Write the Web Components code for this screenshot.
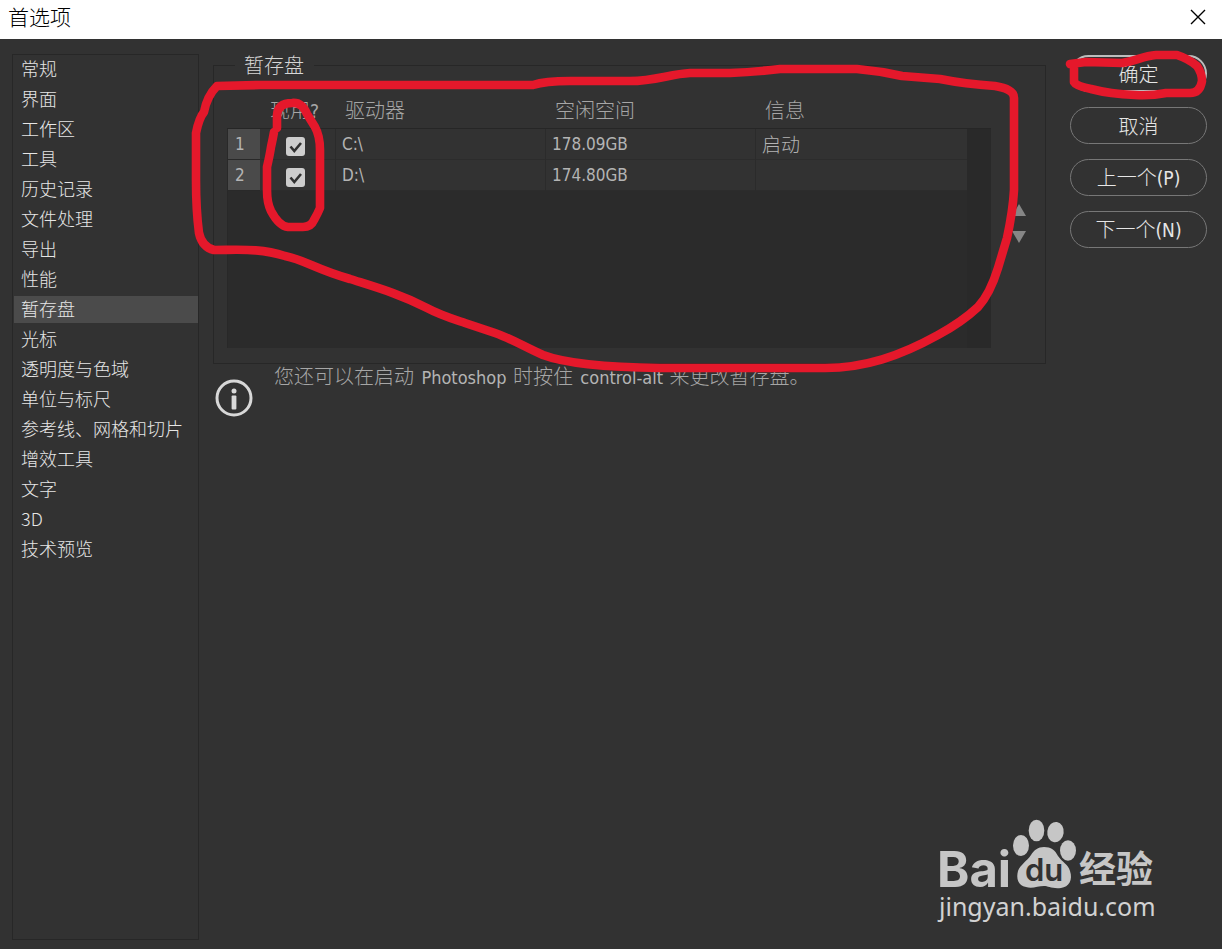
<!DOCTYPE html>
<html lang="zh-CN">
<head>
<meta charset="utf-8">
<title>首选项</title>
<style>
  html, body { margin: 0; min-height: 100%; background: #323232; }
  body { font-family: "DejaVu Sans Condensed", "Noto Sans CJK SC", sans-serif; }
</style>
</head>
<body>
<prefs-dialog></prefs-dialog>
<script>
const define = (name, html, setup) => {
  const template = document.createElement('template');
  template.innerHTML = html;
  customElements.define(name, class extends HTMLElement {
    constructor() {
      super();
      this.attachShadow({ mode: 'open' }).append(template.content.cloneNode(true));
    }
    connectedCallback() { if (setup) setup(this, this.shadowRoot); }
  });
};

define('title-bar', `
  <style>
    :host { display: flex; align-items: center; justify-content: space-between; height: 39px; padding: 0 15px 0 8px; background: #fff; color: #000; box-sizing: border-box; }
    h1 { margin: 0; padding-bottom: 8px; font: 300 21px/30px "Noto Sans CJK SC", sans-serif; }
    button { display: block; border: 0; padding: 0; margin: 0 0 6px; background: none; line-height: 0; }
  </style>
  <h1><slot></slot></h1>
  <button type="button" aria-label="关闭"><svg width="18" height="18" viewBox="0 0 18 18"><path d="M2 2 16 16M16 2 2 16" stroke="#000" stroke-width="1.4"/></svg></button>
`);

define('category-item', `
  <style>
    :host { display: block; }
    a { display: block; height: 27px; padding-left: 7px; color: #e6e6e6; font: 300 18px/25px "Noto Sans CJK SC", sans-serif; text-decoration: none; white-space: nowrap; }
    :host([selected]) a { background: #4b4b4b; }
  </style>
  <a href="#"><slot></slot></a>
`);

define('category-list', `
  <style>
    :host { display: block; border: 1px solid #272727; padding: 1px 0 0 1px; }
    nav { display: flex; flex-direction: column; gap: 3px; }
  </style>
  <nav aria-label="分类"><slot></slot></nav>
`);

define('pill-button', `
  <style>
    :host { display: block; }
    button { display: block; box-sizing: border-box; width: 100%; height: 37px; padding: 0; border: 1px solid #777; border-radius: 19px; background: transparent; color: #e6e6e6; font: 300 20px/28px "Noto Sans CJK SC", sans-serif; }
    :host([primary]) button { border: 2px solid #bdbdbd; }
    ::slotted(span) { font: 19px/28px "DejaVu Sans Condensed", "Noto Sans", sans-serif; }
  </style>
  <button type="button"><slot></slot></button>
`);

define('group-box', `
  <style>
    :host { display: block; }
    fieldset { margin: 0; padding: 16px 18px 15px 13px; border: 1px solid #272727; min-width: 0; }
    legend { margin-left: 8px; padding: 0 10px 0 9px; color: #d6d6d6; font: 300 20px/22px "Noto Sans CJK SC", sans-serif; }
    div { display: flex; justify-content: space-between; gap: 20px; }
  </style>
  <fieldset><legend></legend><div><slot></slot></div></fieldset>
`, (host, root) => { root.querySelector('legend').textContent = host.getAttribute('label'); });

define('disk-table', `
  <style>
    :host { display: flex; flex: 1; min-width: 0; }
    .grid { flex: 1; display: flex; flex-direction: column; }
    table { width: 100%; border-collapse: separate; border-spacing: 0; table-layout: fixed; color: #b4b4b4; }
    th, td { padding: 0; text-align: left; box-sizing: border-box; white-space: nowrap; }
    thead th { height: 37px; padding-left: 10px; border-bottom: 1px solid #262626; font: 300 20px/28px "Noto Sans CJK SC", sans-serif; color: #a6a6a6; }
    thead span { font: 19px/28px "DejaVu Sans Condensed", "Noto Sans", sans-serif; }
    tbody th, tbody td { height: 31px; border-bottom: 1px solid #2c2c2c; border-left: 1px solid #2b2b2b; font: 17px/24px "DejaVu Sans Condensed", "Noto Sans", sans-serif; padding-left: 6px; }
    tbody th { background: #4a4a4a; background-clip: padding-box; border-color: #292929; padding-left: 7px; }
    tbody td.cjk { font: 300 19px/24px "Noto Sans CJK SC", sans-serif; }
    tbody td.use { padding: 4px 0 0 25px; border-left-color: transparent; }
    input { appearance: none; display: block; margin: 0; width: 19px; height: 19px; border-radius: 3px; background: #cdcdcd url("data:image/svg+xml,%3Csvg xmlns='http://www.w3.org/2000/svg' viewBox='0 0 19 19'%3E%3Cpath d='M4.5 9.5 8.3 14 15 6' fill='none' stroke='%23303030' stroke-width='2.6'/%3E%3C/svg%3E"); }
    .rest { flex: 1; background: #2b2b2b; border-left: 1px solid #282828; }
    .track { width: 24px; margin-top: 36px; background: #292929; border-top: 1px solid #262626; box-sizing: border-box; }
  </style>
  <div class="grid">
    <table>
      <colgroup><col style="width:33px"><col style="width:75px"><col style="width:210px"><col style="width:210px"><col></colgroup>
      <thead><tr><th></th><th scope="col">现用<span>?</span></th><th scope="col">驱动器</th><th scope="col">空闲空间</th><th scope="col">信息</th></tr></thead>
      <tbody>
        <tr><th scope="row">1</th><td class="use"><input type="checkbox" checked aria-label="现用 C:"></td><td>C:\\</td><td>178.09GB</td><td class="cjk">启动</td></tr>
        <tr><th scope="row">2</th><td class="use"><input type="checkbox" checked aria-label="现用 D:"></td><td>D:\\</td><td>174.80GB</td><td></td></tr>
      </tbody>
    </table>
    <div class="rest"></div>
  </div>
  <div class="track"></div>
`);

define('order-arrows', `
  <style>
    :host { display: flex; flex-direction: column; justify-content: center; gap: 13px; height: 256px; padding-top: 6px; box-sizing: border-box; }
    button { display: block; width: 16px; height: 14px; padding: 0; border: 0; background: none; line-height: 0; }
  </style>
  <button type="button" aria-label="上移"><svg width="16" height="14"><path d="M8 1 15 13H1z" fill="#868686"/></svg></button>
  <button type="button" aria-label="下移"><svg width="16" height="14"><path d="M8 13 15 1H1z" fill="#868686"/></svg></button>
`);

define('info-note', `
  <style>
    :host { display: flex; gap: 21px; padding-left: 2px; }
    svg { flex: none; margin-top: 15px; }
    p { margin: 0; color: #a6a6a6; font: 300 20px/24px "Noto Sans CJK SC", sans-serif; }
    ::slotted(span) { margin: 0 2px 0 3px; font: 18px/24px "DejaVu Sans Condensed", "Noto Sans", sans-serif; color: #b4b4b4; }
  </style>
  <svg width="38" height="38" viewBox="0 0 38 38"><circle cx="19" cy="19" r="17" fill="none" stroke="#d8d8d8" stroke-width="3"/><circle cx="19" cy="12" r="2.5" fill="#d8d8d8"/><rect x="16.6" y="16.5" width="4.8" height="14" rx="1" fill="#d8d8d8"/></svg>
  <p><slot></slot></p>
`);

define('ink-marks', `
  <style>
    :host { position: absolute; top: 0; left: 0; pointer-events: none; line-height: 0; }
    path { fill: none; stroke: #e5182b; stroke-width: 8.6; stroke-linecap: round; stroke-linejoin: round; }
  </style>
  <svg width="1222" height="400" viewBox="0 0 1222 400" aria-hidden="true">
    <path d="M217 86 260 85H533Q545 81 570 81H630C655 81 670 74 690 73H730Q755 72 780 69H857Q880 71 902 76L940 79Q965 84 995 86 1014 89 1014 98V190Q1013 210 1007 238L998 268Q990 294 978 307 962 322 938 335C900 356 865 368 825 368H660Q575 367 543 355C525 347 512 339 495 333L465 323C450 318 440 315 427 308 400 294 375 287 350 279 315 269 305 260 285 256 260 248 240 250 214 250Q202 247 199 233 196 210 196 180V133Q199 118 204 112 207 96 217 86Z"/>
    <path d="M277 128V115Q278 103 292 103 302 102 307 114L315 127Q320 136 320 150V208Q318 213 314 220 311 227 303 227H288Q279 226 271 211 267 203 267 190V167Q270 154 271 147 273 138 274 132"/>
    <path d="M1070 64 1086 62 1122 63C1137 61 1142 56 1156 55H1177Q1189 59 1197 66 1202 73 1202 81 1200 93 1190 93H1166Q1151 96 1135 95 1110 94 1091 89 1076 86 1074 82V66"/>
  </svg>
`);

define('site-mark', `
  <style>
    :host { position: absolute; right: 62px; bottom: 20px; line-height: 0; pointer-events: none; }
    text { fill: #c6c6c6; }
    .name { font: 700 49px Inter, sans-serif; }
    .du { font: 600 31px Inter, sans-serif; fill: #323232; }
    .zh { font: 700 37px "Noto Sans CJK SC", sans-serif; }
    .url { font: 400 25px "Noto Sans", sans-serif; fill: #d2d2d2; }
  </style>
  <svg width="224" height="112" viewBox="936 817 224 112">
    <g fill="#c6c6c6"><ellipse cx="1021" cy="845.5" rx="8" ry="10.5"/><ellipse cx="1036.5" cy="830.5" rx="7.8" ry="10.8"/><ellipse cx="1055.5" cy="832" rx="8.2" ry="10.2" transform="rotate(8 1055 832)"/><ellipse cx="1068" cy="850.5" rx="8" ry="10.3"/>
    <path d="M1044 847C1051 847 1055 850 1058 856 1062 862 1068 864 1070 871 1073 880 1069 887 1061 888 1052 889 1048 886 1044 886 1038 886 1032 889 1026 887 1018 886 1016 878 1018 871 1020 865 1027 861 1031 855 1034 850 1038 847 1044 847Z"/></g>
    <text class="name" x="937" y="887">Bai</text>
    <text class="du" x="1025" y="881">du</text>
    <text class="zh" x="1079" y="883">经验</text>
    <text class="url" x="939" y="916">jingyan.baidu.com</text>
  </svg>
`);

define('prefs-dialog', `
  <style>
    :host { display: flex; flex-direction: column; position: relative; min-height: 100vh; background: #323232; overflow: hidden; }
    main { flex: 1; display: grid; grid-template-columns: 187px minmax(0, 1fr) 137px; padding: 15px 15px 9px 12px; }
    section { padding: 0 24px 0 14px; }
    aside { display: flex; flex-direction: column; gap: 15px; padding-top: 1px; }
  </style>
  <title-bar>首选项</title-bar>
  <main>
    <category-list>
      <category-item>常规</category-item><category-item>界面</category-item><category-item>工作区</category-item><category-item>工具</category-item><category-item>历史记录</category-item><category-item>文件处理</category-item><category-item>导出</category-item><category-item>性能</category-item><category-item selected>暂存盘</category-item><category-item>光标</category-item><category-item>透明度与色域</category-item><category-item>单位与标尺</category-item><category-item>参考线、网格和切片</category-item><category-item>增效工具</category-item><category-item>文字</category-item><category-item>3D</category-item><category-item>技术预览</category-item>
    </category-list>
    <section>
      <group-box label="暂存盘"><disk-table></disk-table><order-arrows></order-arrows></group-box>
      <info-note>您还可以在启动 <span>Photoshop</span> 时按住 <span>control-alt</span> 来更改暂存盘。</info-note>
    </section>
    <aside>
      <pill-button primary>确定</pill-button>
      <pill-button>取消</pill-button>
      <pill-button>上一个<span>(P)</span></pill-button>
      <pill-button>下一个<span>(N)</span></pill-button>
    </aside>
  </main>
  <ink-marks></ink-marks>
  <site-mark></site-mark>
`);
</script>
</body>
</html>
